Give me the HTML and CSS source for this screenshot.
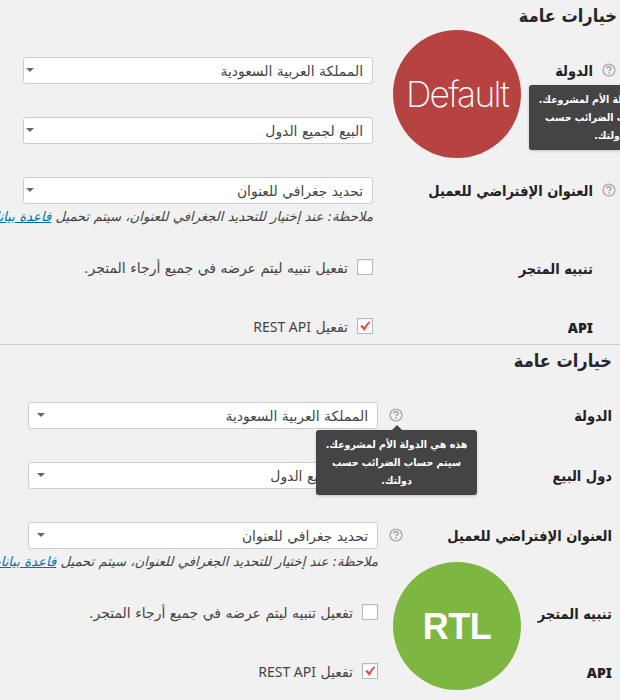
FILE: index.html
```html
<!DOCTYPE html>
<html lang="ar" dir="rtl">
<head>
<meta charset="utf-8">
<title>خيارات عامة</title>
<link rel="stylesheet" href="styles.css">
</head>
<body>
<svg class="defs" aria-hidden="true">
  <symbol id="help" viewBox="0 0 14 14">
    <circle cx="7" cy="7" r="5.9" fill="none" stroke="#aaa" stroke-width="1.4"/>
    <path d="M4.9 5.6C4.9 3 9.1 3 9.1 5.4C9.1 6.8 7.1 6.7 7.1 8.3" fill="none" stroke="#aaa" stroke-width="1.6"/>
    <rect x="6.3" y="9.2" width="1.7" height="1.6" fill="#aaa"/>
  </symbol>
  <symbol id="check" viewBox="0 0 12 12">
    <path d="M1.2 6.2L3.1 4.9L5.3 7.1Q7.3 3.4 10.2 1.2L11.4 2.2Q8 5.6 5.8 10.4H4.9Q3.3 8.1 1.2 6.2Z" fill="#e14d43"/>
  </symbol>
</svg>

<section class="panel panel-default">
  <h2>خيارات عامة</h2>
  <div class="row">
    <div class="label"><svg class="help"><use href="#help"/></svg><b>الدولة</b>
      <div class="tip">هذه هي الدولة الأم لمشروعك.<br>سيتم حساب الضرائب حسب<br>دولتك.</div>
    </div>
    <div class="select">المملكة العربية السعودية</div>
  </div>
  <div class="row">
    <div class="label"></div>
    <div class="select">البيع لجميع الدول</div>
  </div>
  <div class="row row-note">
    <div class="label"><svg class="help"><use href="#help"/></svg><b>العنوان الإفتراضي للعميل</b></div>
    <div class="field">
      <div class="select">تحديد جغرافي للعنوان</div>
      <p class="note">ملاحظة: عند إختيار للتحديد الجغرافي للعنوان، سيتم تحميل <a>قاعدة بيانات</a></p>
    </div>
  </div>
  <div class="row row-check">
    <div class="label"><b>تنبيه المتجر</b></div>
    <div class="check"><span class="box"></span><span>تفعيل تنبيه ليتم عرضه في جميع أرجاء المتجر.</span></div>
  </div>
  <div class="row row-check">
    <div class="label"><b class="latin">API</b></div>
    <div class="check"><span class="box"><svg><use href="#check"/></svg></span><span>تفعيل <span class="latin">REST API</span></span></div>
  </div>
  <div class="badge badge-default" dir="ltr">Default</div>
</section>

<section class="panel panel-rtl">
  <h2>خيارات عامة</h2>
  <div class="row">
    <div class="label"><b>الدولة</b><svg class="help"><use href="#help"/></svg>
      <div class="tip">هذه هي الدولة الأم لمشروعك.<br>سيتم حساب الضرائب حسب<br>دولتك.</div>
    </div>
    <div class="select">المملكة العربية السعودية</div>
  </div>
  <div class="row">
    <div class="label"><b>دول البيع</b></div>
    <div class="select">البيع لجميع الدول</div>
  </div>
  <div class="row row-note">
    <div class="label"><b>العنوان الإفتراضي للعميل</b><svg class="help"><use href="#help"/></svg></div>
    <div class="field">
      <div class="select">تحديد جغرافي للعنوان</div>
      <p class="note">ملاحظة: عند إختيار للتحديد الجغرافي للعنوان، سيتم تحميل <a>قاعدة بيانات</a></p>
    </div>
  </div>
  <div class="row row-check">
    <div class="label"><b>تنبيه المتجر</b></div>
    <div class="check"><span class="box"></span><span>تفعيل تنبيه ليتم عرضه في جميع أرجاء المتجر.</span></div>
  </div>
  <div class="row row-check">
    <div class="label"><b class="latin">API</b></div>
    <div class="check"><span class="box"><svg><use href="#check"/></svg></span><span>تفعيل <span class="latin">REST API</span></span></div>
  </div>
  <div class="badge badge-rtl" dir="ltr">RTL</div>
</section>
</body>
</html>
```
FILE: styles.css
```css
* { box-sizing: border-box; }
html, body { overflow: hidden; }
body {
  margin: 0;
  height: 700px;
  background: #f1f1f1;
  color: #444;
  font: 14px/20px "DejaVu Sans", sans-serif;
}
.defs { position: absolute; width: 0; height: 0; }
.panel { position: relative; height: 345px; overflow: hidden; }
.panel-default { border-bottom: 1px solid #ccc; }
h2 {
  margin: 0;
  height: 57px;
  padding: 4px 3px 0 0;
  color: #23282d;
  font: bold 18px/24px "DejaVu Sans Condensed", sans-serif;
}
.panel-rtl h2 { padding-right: 8px; }
.row { display: flex; align-items: flex-start; height: 60px; }
.row-note { height: 82px; }
.row-check { height: 59px; }
.label {
  position: relative;
  flex: none;
  display: flex;
  align-items: center;
  width: 247px;
  height: 27px;
  padding: 0 27px 1px 0;
  color: #222;
  font: bold 14.5px/20px "DejaVu Sans Condensed", sans-serif;
  white-space: nowrap;
}
.label b { padding-top: 2px; }
.row-check .label { height: 18px; }
.help { flex: none; width: 14px; height: 14px; margin: 0 -23px 0 9px; }
.panel-rtl .label { width: 242px; padding: 0 8px 1px 11px; justify-content: space-between; }
.panel-rtl .help { margin: 0; }
.latin, .label .latin { font-family: "Noto Sans", sans-serif; font-size: 14px; line-height: 1; }
.select {
  position: relative;
  flex: none;
  width: 350px;
  height: 27px;
  padding: 3px 9px 0;
  border: 1px solid #ccc;
  border-radius: 3px;
  background: #fff;
  font-size: 13.9px;
  white-space: nowrap;
}
.select::after {
  content: "";
  position: absolute;
  left: 2px;
  top: 10px;
  border: 4px solid transparent;
  border-top-color: #666;
  border-bottom: 0;
}
.panel-rtl .select::after { left: 8px; }
.field { width: 350px; }
.note {
  margin: 3px 0 0;
  font-size: 13.2px;
  font-style: italic;
  line-height: 20px;
  white-space: nowrap;
}
.note a { color: #0073aa; text-decoration: underline; }
.check {
  display: flex;
  gap: 9px;
  line-height: 18px;
  white-space: nowrap;
}
.box {
  flex: none;
  display: grid;
  place-items: center;
  width: 16px;
  height: 16px;
  border: 1px solid #b4b9be;
  background: #fff;
  box-shadow: inset 0 1px 2px rgba(0, 0, 0, .07);
}
.box svg { width: 12px; height: 12px; }
.tip {
  position: absolute;
  z-index: 3;
  top: 28px;
  right: -70px;
  width: 161px;
  height: 65px;
  padding-top: 5px;
  border-radius: 3px;
  background: #444;
  box-shadow: 0 1px 3px rgba(0, 0, 0, .2);
  color: #fff;
  font: bold 10.5px/18px "DejaVu Sans Condensed", sans-serif;
  text-align: center;
}
.panel-rtl .tip { right: 143px; }
.panel-rtl .tip::before {
  content: "";
  position: absolute;
  left: 76px;
  top: -5px;
  border: 5px solid transparent;
  border-bottom-color: #444;
  border-top: 0;
}
.badge {
  position: absolute;
  left: 393px;
  display: grid;
  place-items: center;
  width: 128px;
  height: 128px;
  border-radius: 50%;
  color: #fff;
}
.badge-default {
  top: 30px;
  padding-top: 2px;
  background: #b74242;
  font: 200 35.5px/40px Inter, sans-serif;
  letter-spacing: -1.8px;
}
.badge-rtl {
  top: 217px;
  padding-top: 2px;
  background: #7eb642;
  font: bold 36px/40px "Liberation Sans", sans-serif;
  letter-spacing: -.5px;
}
```
